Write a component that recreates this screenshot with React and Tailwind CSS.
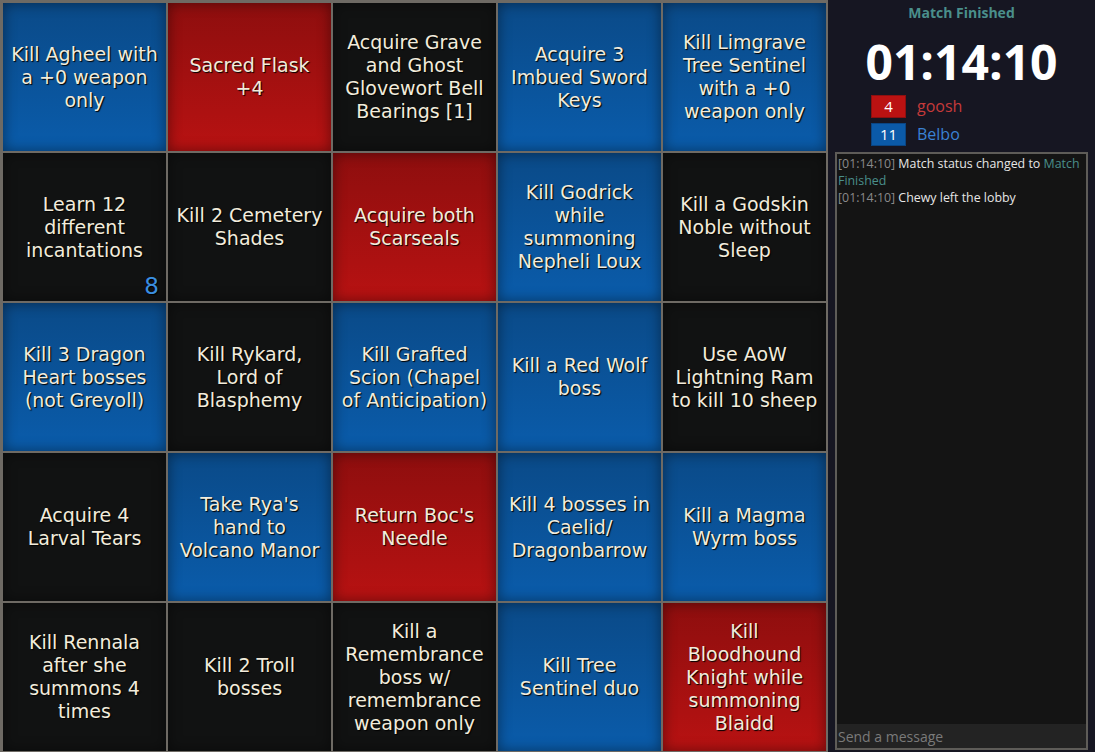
import React from "react";

const cells = [
  { t: "Kill Agheel with a +0 weapon only", c: "blue" },
  { t: "Sacred Flask +4", c: "red" },
  { t: "Acquire Grave and Ghost Glovewort Bell Bearings [1]", c: "black" },
  { t: "Acquire 3 Imbued Sword Keys", c: "blue" },
  { t: "Kill Limgrave Tree Sentinel with a +0 weapon only", c: "blue" },
  { t: "Learn 12 different incantations", c: "black", n: 8 },
  { t: "Kill 2 Cemetery Shades", c: "black" },
  { t: "Acquire both Scarseals", c: "red" },
  { t: "Kill Godrick while summoning Nepheli Loux", c: "blue" },
  { t: "Kill a Godskin Noble without Sleep", c: "black" },
  { t: "Kill 3 Dragon Heart bosses (not Greyoll)", c: "blue" },
  { t: "Kill Rykard, Lord of Blasphemy", c: "black" },
  { t: "Kill Grafted Scion (Chapel of Anticipation)", c: "blue" },
  { t: "Kill a Red Wolf boss", c: "blue" },
  { t: "Use AoW Lightning Ram to kill 10 sheep", c: "black" },
  { t: "Acquire 4 Larval Tears", c: "black" },
  { t: "Take Rya's hand to Volcano Manor", c: "blue" },
  { t: "Return Boc's Needle", c: "red" },
  { t: "Kill 4 bosses in Caelid/ Dragonbarrow", c: "blue" },
  { t: "Kill a Magma Wyrm boss", c: "blue" },
  { t: "Kill Rennala after she summons 4 times", c: "black" },
  { t: "Kill 2 Troll bosses", c: "black" },
  { t: "Kill a Remembrance boss w/ remembrance weapon only", c: "black" },
  { t: "Kill Tree Sentinel duo", c: "blue" },
  { t: "Kill Bloodhound Knight while summoning Blaidd", c: "red" },
];

const colors = {
  blue: "bg-gradient-to-b from-[#0a4a88] to-[#0a5cab] shadow-[inset_0_0_14px_rgba(0,0,0,0.45)]",
  red: "bg-gradient-to-b from-[#8e0e0e] to-[#b81212] shadow-[inset_0_0_14px_rgba(0,0,0,0.45)]",
  black: "bg-[#111212] shadow-[inset_0_0_14px_rgba(0,0,0,0.45)]",
};

const App = () => {
  return (
    <div className="flex h-[752px] w-[1095px] overflow-hidden bg-[#161622] font-[family-name:'Open_Sans',sans-serif]">
      <div className="grid h-full w-[828px] shrink-0 grid-cols-5 grid-rows-5 gap-[2px] bg-[#6e6a64] pb-[1px] pl-[3px] pr-[2px] pt-[3px]">
        {cells.map((item, i) => (
          <div
            key={i}
            className={`relative flex items-center justify-center px-[8px] text-center font-[family-name:'DejaVu_Sans',sans-serif] text-[19px] leading-[23px] text-[#f2ecdc] [text-shadow:1px_1px_1px_#000] ${colors[item.c]}`}
          >
            {item.t}
            {item.n && (
              <span className="absolute bottom-[3px] right-[7px] text-[23px] leading-none text-[#3a8ee0]">
                {item.n}
              </span>
            )}
          </div>
        ))}
      </div>
      <div className="flex flex-1 flex-col px-[7px] pb-[2px]">
        <h3 className="mt-[3px] text-center text-[14px] font-bold leading-[19px] text-[#4a8f8b]">
          Match Finished
        </h3>
        <div className="mt-[12px] text-center text-[48px] font-bold leading-[56px] text-white">
          01:14:10
        </div>
        <div className="ml-[36px] mt-[4px] flex flex-col gap-[4px]">
          <div className="flex items-center gap-[11px]">
            <span className="flex h-[23px] w-[35px] items-center justify-center border border-[#8c1010] bg-[#bb1212] text-[15px] text-white">
              4
            </span>
            <span className="text-[16px] text-[#c63a3a]">goosh</span>
          </div>
          <div className="flex items-center gap-[11px]">
            <span className="flex h-[23px] w-[35px] items-center justify-center border border-[#0a4583] bg-[#0b5aa8] text-[15px] text-white">
              11
            </span>
            <span className="text-[16px] text-[#3a82d4]">Belbo</span>
          </div>
        </div>
        <div className="mt-[6px] flex flex-1 flex-col border-2 border-[#5e5c58] bg-[#141414]">
          <div className="flex-1 px-[1px] pt-[1px] text-[12.4px] leading-[17px] text-[#e6e6e6]">
            <p>
              <span className="text-[#8a8a8a]">[01:14:10]</span> Match status changed to{" "}
              <span className="text-[#4a8f8b]">Match Finished</span>
            </p>
            <p>
              <span className="text-[#8a8a8a]">[01:14:10]</span> Chewy left the lobby
            </p>
          </div>
          <input
            className="h-[24px] w-full bg-[#232323] px-[1px] text-[14px] text-white outline-none placeholder:text-[#7a7a7a]"
            type="text"
            placeholder="Send a message"
          />
        </div>
      </div>
    </div>
  );
};

export default App;
